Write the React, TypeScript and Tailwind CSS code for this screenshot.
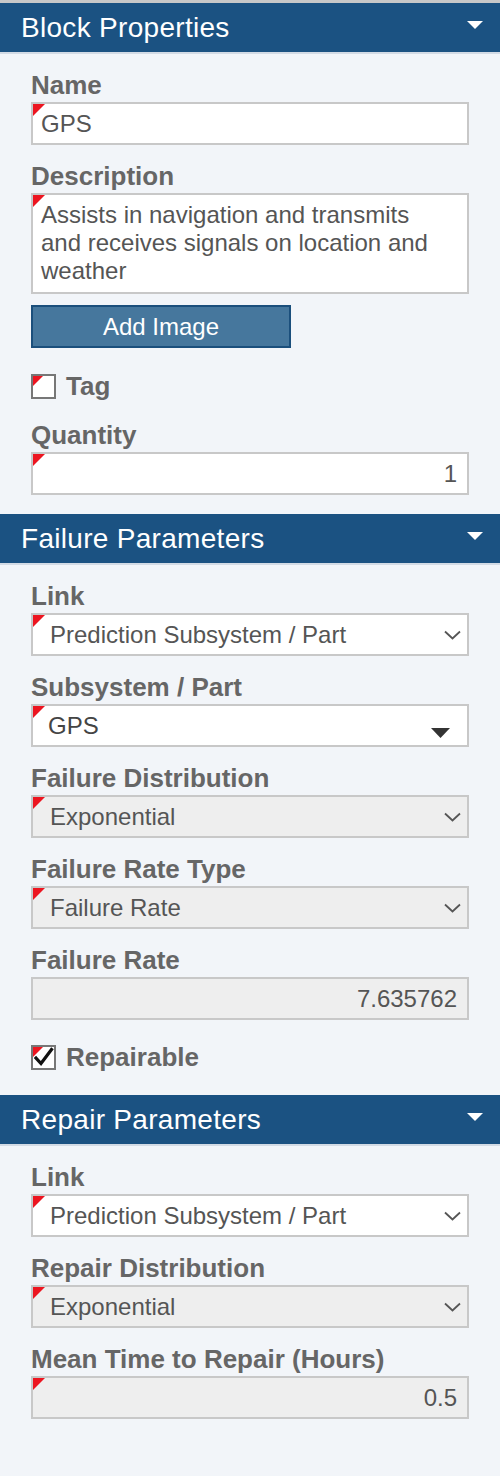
import React from "react";

const FONT = { fontFamily: '"Liberation Sans", Arial, Helvetica, sans-serif' };

function RedCorner({ size = 12 }: { size?: number }) {
  return (
    <svg
      className="absolute left-0 top-0"
      width={size}
      height={size}
      viewBox={`0 0 ${size} ${size}`}
    >
      <polygon points={`0,0 ${size},0 0,${size}`} fill="#ec1520" />
    </svg>
  );
}

function Header({ title }: { title: string }) {
  return (
    <div className="h-[49px] bg-[#1b5282] border-b-2 border-[#d3dbe5] box-content flex items-center justify-between pl-[21px] pr-[17px]">
      <span className="text-white text-[28px] tracking-[0.3px] leading-none">{title}</span>
      <svg width="16" height="8" viewBox="0 0 16 8" className="mb-[5px]">
        <polygon points="0,0 16,0 8,8" fill="#ffffff" />
      </svg>
    </div>
  );
}

function Label({ children }: { children: React.ReactNode }) {
  return (
    <div className="text-[26px] leading-[30px] font-bold text-[#666666] mb-[2px] whitespace-nowrap">
      {children}
    </div>
  );
}

function Chevron() {
  return (
    <svg width="17" height="10" viewBox="0 0 17 10" className="absolute right-[6px] top-1/2 -translate-y-1/2">
      <polyline points="1,1.5 8.5,8.5 16,1.5" fill="none" stroke="#555555" strokeWidth="1.8" />
    </svg>
  );
}

function TextInput({
  value,
  align = "left",
  disabled = false,
  red = true,
}: {
  value: string;
  align?: "left" | "right";
  disabled?: boolean;
  red?: boolean;
}) {
  return (
    <div
      className={`relative h-[43px] border-2 border-[#c8c8c8] flex items-center text-[24px] text-[#555555] ${
        disabled ? "bg-[#eeeeee]" : "bg-white"
      } ${align === "right" ? "justify-end pr-[10px]" : "pl-[8px]"}`}
    >
      {red && <RedCorner />}
      <span className="leading-none">{value}</span>
    </div>
  );
}

function Select({ value, disabled = false }: { value: string; disabled?: boolean }) {
  return (
    <div
      className={`relative h-[43px] border-2 border-[#c8c8c8] flex items-center pl-[17px] text-[24px] text-[#555555] ${
        disabled ? "bg-[#eeeeee]" : "bg-white"
      }`}
    >
      <RedCorner />
      <span className="leading-none">{value}</span>
      <Chevron />
    </div>
  );
}

function ComboSelect({ value }: { value: string }) {
  return (
    <div className="relative h-[43px] border-2 border-[#c8c8c8] bg-white flex items-center pl-[15px] text-[24px] text-[#444444]">
      <RedCorner />
      <span className="leading-none">{value}</span>
      <svg width="19" height="10" viewBox="0 0 19 10" className="absolute right-[17px] top-[22px]">
        <polygon points="0,0 19,0 9.5,10" fill="#333333" />
      </svg>
    </div>
  );
}

function Checkbox({ label, checked }: { label: string; checked: boolean }) {
  return (
    <div className="flex items-center h-[30px]">
      <div className="relative w-[25px] h-[25px] border-2 border-[#777777] bg-white shrink-0">
        <RedCorner size={10} />
        {checked && (
          <svg width="21" height="21" viewBox="0 0 21 21" className="absolute left-0 top-0">
            <polyline
              points="3,11 8,16.5 18.5,2.5"
              fill="none"
              stroke="#111111"
              strokeWidth="3.2"
              strokeLinecap="square"
            />
          </svg>
        )}
      </div>
      <span className="ml-[10px] text-[26px] font-bold text-[#666666] leading-none">{label}</span>
    </div>
  );
}

function Field({ label, children, last = false }: { label: string; children: React.ReactNode; last?: boolean }) {
  return (
    <div className={last ? "" : "mb-[16px]"}>
      <Label>{label}</Label>
      {children}
    </div>
  );
}

export default function App() {
  return (
    <div style={FONT} className="w-[500px] min-h-[1476px] bg-[#f2f5f9] border-t-[3px] border-[#c8c8c8]">
      <Header title="Block Properties" />
      <div className="pl-[31px] pr-[31px] pt-[16px] pb-[19px]">
        <Field label="Name">
          <TextInput value="GPS" />
        </Field>
        <div>
          <Label>Description</Label>
          <div className="relative h-[101px] border-2 border-[#c8c8c8] bg-white pl-[8px] pr-[20px] pt-[6px] text-[24px] leading-[28px] text-[#555555]">
            <RedCorner />
            Assists in navigation and transmits and receives signals on location and weather
          </div>
        </div>
        <button className="mt-[11px] w-[260px] h-[43px] bg-[#46779d] border-2 border-[#1b4f7c] text-white text-[24px] leading-none flex items-center justify-center">
          Add Image
        </button>
        <div className="mt-[23px] mb-[19px]">
          <Checkbox label="Tag" checked={false} />
        </div>
        <Field label="Quantity" last>
          <TextInput value="1" align="right" />
        </Field>
      </div>

      <Header title="Failure Parameters" />
      <div className="pl-[31px] pr-[31px] pt-[16px] pb-[23px]">
        <Field label="Link">
          <Select value="Prediction Subsystem / Part" />
        </Field>
        <Field label="Subsystem / Part">
          <ComboSelect value="GPS" />
        </Field>
        <Field label="Failure Distribution">
          <Select value="Exponential" disabled />
        </Field>
        <Field label="Failure Rate Type">
          <Select value="Failure Rate" disabled />
        </Field>
        <Field label="Failure Rate" last>
          <TextInput value="7.635762" align="right" disabled red={false} />
        </Field>
        <div className="mt-[22px]">
          <Checkbox label="Repairable" checked={true} />
        </div>
      </div>

      <Header title="Repair Parameters" />
      <div className="pl-[31px] pr-[31px] pt-[16px] pb-[40px]">
        <Field label="Link">
          <Select value="Prediction Subsystem / Part" />
        </Field>
        <Field label="Repair Distribution">
          <Select value="Exponential" disabled />
        </Field>
        <Field label="Mean Time to Repair (Hours)" last>
          <TextInput value="0.5" align="right" disabled />
        </Field>
      </div>
    </div>
  );
}
